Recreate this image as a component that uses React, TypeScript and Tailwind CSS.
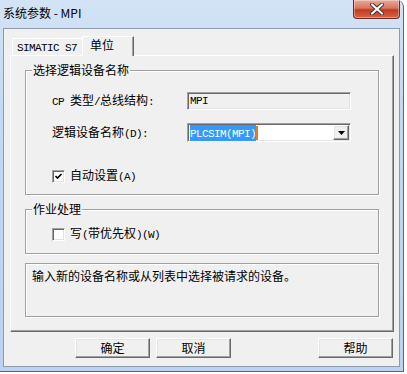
import type { ReactNode } from "react";

const sunken =
  "border border-t-[#a0a0a0] border-l-[#a0a0a0] border-b-white border-r-white shadow-[inset_1px_1px_0_#696969,inset_-1px_-1px_0_#e3e3e3]";
const raised =
  "border border-t-white border-l-white border-b-[#696969] border-r-[#696969] shadow-[inset_-1px_-1px_0_#a0a0a0,inset_1px_1px_0_#e3e3e3]";
const etched =
  "border border-[#a0a0a0] shadow-[inset_1px_1px_0_#fff,1px_1px_0_#fff]";

function Lat({ children }: { children: ReactNode }) {
  return (
    <span className="font-['Liberation_Mono',monospace] text-[11px] tracking-[-0.6px]">
      {children}
    </span>
  );
}

function CheckBox({ checked }: { checked?: boolean }) {
  return (
    <span className={`flex size-[13px] shrink-0 items-center justify-center bg-white ${sunken}`}>
      {checked && (
        <svg width="9" height="9" viewBox="0 0 9 9">
          <path d="M1.5 4 L3.5 6 L7.5 2" fill="none" stroke="#000" strokeWidth="1.6" />
        </svg>
      )}
    </span>
  );
}

function GroupBox({
  title,
  className,
  children,
}: {
  title?: string;
  className: string;
  children: ReactNode;
}) {
  return (
    <div className={`mx-[14px] ${etched} ${className}`}>
      {title && (
        <div className="-mt-[8px] ml-[6px] w-fit bg-[#f0f0f0] px-px leading-[14px]">
          {title}
        </div>
      )}
      {children}
    </div>
  );
}

function Btn({ label }: { label: string }) {
  return (
    <button
      type="button"
      className={`flex h-[20px] w-[75px] items-center justify-center bg-[#f0f0f0] text-[12px] leading-[14px] text-black ${raised}`}
    >
      {label}
    </button>
  );
}

export default function App() {
  return (
    <div className="h-[374px] w-[407px] overflow-hidden bg-white font-['Noto_Sans_CJK_SC',sans-serif] text-[12px] leading-[14px] text-black">
      <div className="relative flex h-[372px] w-[404px] flex-col overflow-hidden rounded-tr-[7px] border-b border-r border-[#5c6878] bg-[linear-gradient(to_bottom,#d3e3f6,#c3d8f1_30%,#bcd2ee)]">
        {/* title bar */}
        <div className="flex h-[28px] shrink-0 items-center pl-[3px] pb-[2px] text-[12px]">
          系统参数 - MPI
        </div>
        <div className="absolute right-[3px] top-0 flex h-[19px] w-[47px] items-center justify-center rounded-b-[4px] border border-t-0 border-[#6e2a20] bg-[linear-gradient(to_bottom,#e9aa98,#d8765f_45%,#c23a20_55%,#d3664a)] shadow-[inset_0_0_0_1px_rgba(255,255,255,0.35)]">
          <svg width="16" height="12" viewBox="0 0 16 12">
            <path d="M3 1.5 L13 10.5 M13 1.5 L3 10.5" stroke="#4a2a2a" strokeWidth="4" strokeLinecap="round" />
            <path d="M3 1.5 L13 10.5 M13 1.5 L3 10.5" stroke="#fff" strokeWidth="2.2" strokeLinecap="round" />
          </svg>
        </div>

        {/* client area */}
        <div className="ml-[3px] flex h-[339px] w-[397px] flex-col border border-[#8e9bab] bg-[#f0f0f0]">
          {/* tabs */}
          <div className="mt-[7px] flex h-[19px] items-end pl-[8px]">
            <div className="flex h-[17px] w-[70px] items-center border-l border-t border-white pl-[4px] pt-px">
              <Lat>SIMATIC S7</Lat>
            </div>
            <div className="relative z-10 -mb-px flex h-[20px] w-[52px] items-start border-l border-r border-t border-l-white border-r-[#696969] border-t-white bg-[#f0f0f0] pl-[7px] pt-px shadow-[inset_-1px_0_0_#a0a0a0]">
              单位
            </div>
          </div>

          {/* tab panel */}
          <div className="ml-[6px] flex h-[277px] w-[384px] flex-col border border-b-[#696969] border-l-white border-r-[#696969] border-t-white shadow-[inset_-1px_-1px_0_#a0a0a0]">
            <GroupBox title="选择逻辑设备名称" className="mt-[14px] h-[125px]">
              <div className="mt-[15px] flex items-center pl-[26px]">
                <div className="w-[135px]">
                  <Lat>CP </Lat>类型<Lat>/</Lat>总线结构<Lat>:</Lat>
                </div>
                <div className={`flex h-[18px] w-[164px] items-center bg-[#f0f0f0] pl-[2px] ${sunken}`}>
                  <Lat>MPI</Lat>
                </div>
              </div>
              <div className="mt-[13px] flex items-center pl-[26px]">
                <div className="w-[135px]">
                  逻辑设备名称<Lat>(D):</Lat>
                </div>
                <div className={`flex h-[19px] w-[164px] items-center bg-white pl-[2px] pr-[1px] ${sunken}`}>
                  <span className="bg-[#3399ff] leading-[14px] text-white">
                    <Lat>PLCSIM(MPI)</Lat>
                  </span>
                  <span className="h-[14px] w-[2px] bg-[#e87a1c]" />
                  <div className={`ml-auto flex h-[15px] w-[16px] items-center justify-center bg-[#f0f0f0] ${raised}`}>
                    <svg width="7" height="4" viewBox="0 0 7 4">
                      <polygon points="0,0 7,0 3.5,4" fill="#000" />
                    </svg>
                  </div>
                </div>
              </div>
              <div className="mt-[27px] flex h-[14px] items-center gap-[5px] pl-[26px]">
                <CheckBox checked />
                <span>
                  自动设置<Lat>(A)</Lat>
                </span>
              </div>
            </GroupBox>

            <GroupBox title="作业处理" className="mt-[14px] h-[45px]">
              <div className="mt-[11px] flex h-[14px] items-center gap-[5px] pl-[26px]">
                <CheckBox />
                <span>
                  写<Lat>(</Lat>带优先权<Lat>)(W)</Lat>
                </span>
              </div>
            </GroupBox>

            <GroupBox className="mt-[9px] h-[54px]">
              <div className="pl-[6px] pt-[5px]">输入新的设备名称或从列表中选择被请求的设备。</div>
            </GroupBox>
          </div>

          {/* buttons */}
          <div className="mt-[6px] flex pl-[71px] pr-[6px]">
            <Btn label="确定" />
            <div className="ml-[6px]">
              <Btn label="取消" />
            </div>
            <div className="ml-auto">
              <Btn label="帮助" />
            </div>
          </div>
        </div>
      </div>
    </div>
  );
}
